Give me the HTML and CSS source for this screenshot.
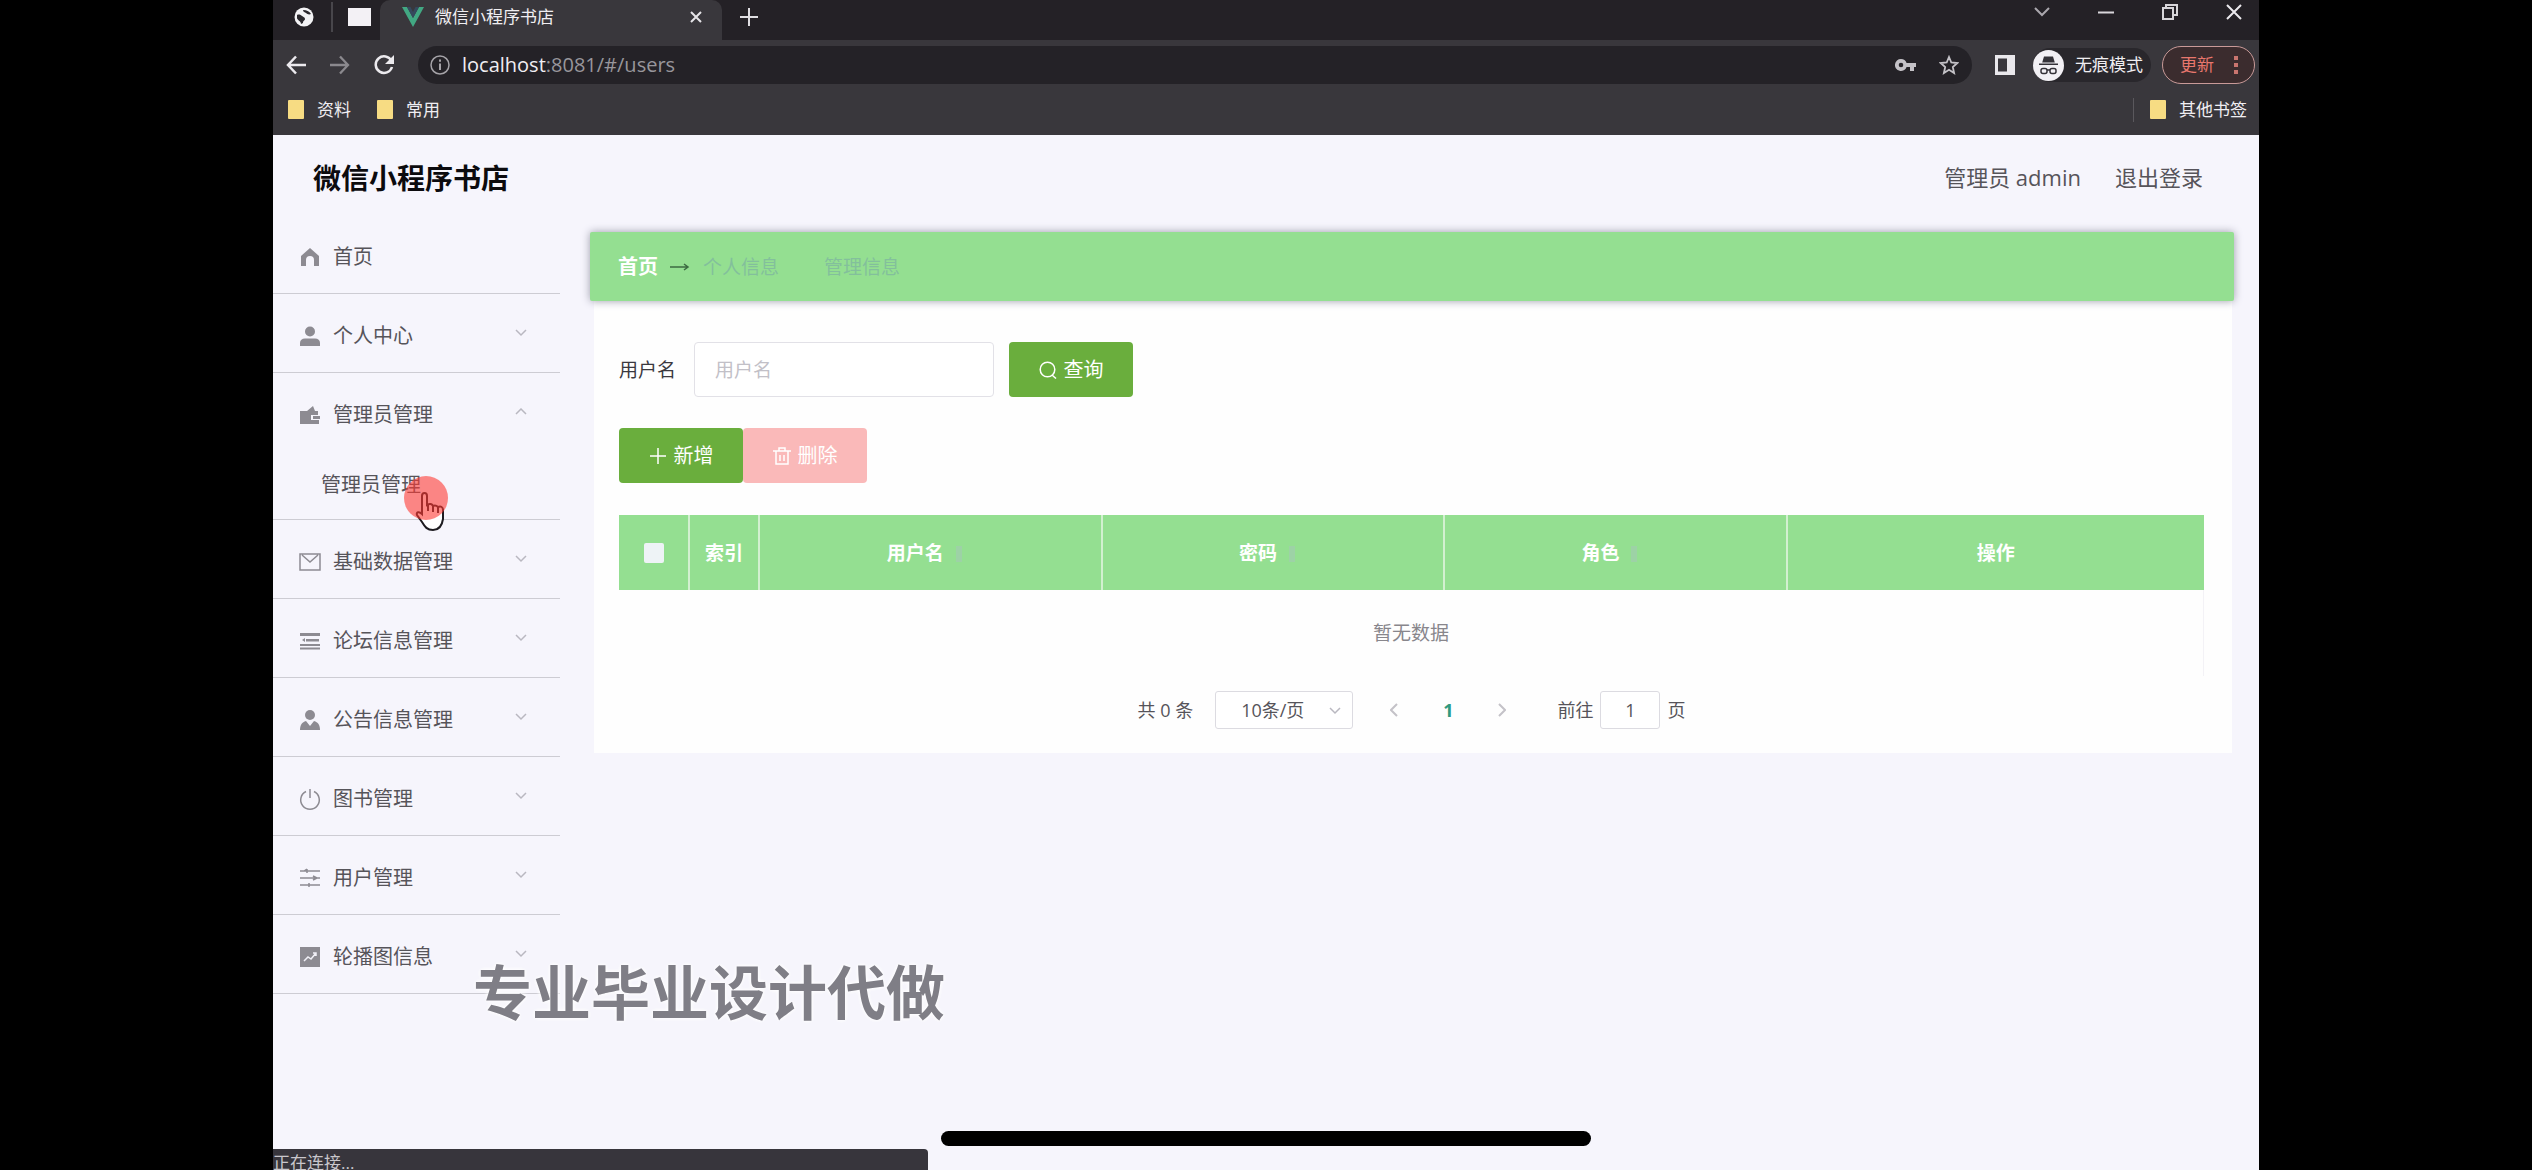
FILE: index.html
```html
<!DOCTYPE html>
<html lang="zh-CN">
<head>
<meta charset="utf-8">
<title>微信小程序书店</title>
<link rel="stylesheet" href="styles.css">
</head>
<body>
<div class="screen">
  <header class="browser">
    <div class="tabstrip">
      <div class="pinned">
        <svg width="20" height="20" viewBox="0 0 20 20"><circle cx="10" cy="10" r="9.5" fill="#f3f3f5"/><path d="M3 8c2-1 4 0 5 1s3 1 3 3-2 1-2 4l-2 1c0-3-4-4-4-6zM9 3c0 2 2 2 3 3s3 2 5 1c-1-2-4-4-8-4z" fill="#2a282d"/></svg>
        <span class="strip-rule"></span>
        <span class="blank-tab"></span>
      </div>
      <div class="tab">
        <svg width="22" height="20" viewBox="0 0 22 20"><path d="M0 0h5l6 11 6-11h5L11 20z" fill="#42a883"/><path d="M5 0h3.500l2.500 5 2.500-5H17l-6 11z" fill="#35495e"/></svg>
        <span class="tab-title">微信小程序书店</span>
        <button class="plain" aria-label="关闭标签页"><svg width="12" height="12" viewBox="0 0 12 12"><path d="M1 1l10 10M11 1L1 11" stroke="#e6e4e8" stroke-width="2"/></svg></button>
      </div>
      <button class="plain new-tab" aria-label="新标签页"><svg width="18" height="18" viewBox="0 0 18 18"><path d="M9 0v18M0 9h18" stroke="#e0dee2" stroke-width="2"/></svg></button>
      <div class="window-buttons">
        <button class="plain" aria-label="标签搜索"><svg width="16" height="10" viewBox="0 0 16 10"><path d="M1 1l7 7 7-7" fill="none" stroke="#aaa7ad" stroke-width="2"/></svg></button>
        <button class="plain" aria-label="最小化"><svg width="16" height="16" viewBox="0 0 16 16"><path d="M0 8.500h16" stroke="#d8d6da" stroke-width="2"/></svg></button>
        <button class="plain" aria-label="还原"><svg width="16" height="16" viewBox="0 0 16 16"><path d="M1 4h10v11H1zM4 4V1h11v10h-4" fill="none" stroke="#d8d6da" stroke-width="2"/></svg></button>
        <button class="plain" aria-label="关闭"><svg width="16" height="16" viewBox="0 0 16 16"><path d="M1 1l14 14M15 1L1 15" stroke="#ebe9ed" stroke-width="2"/></svg></button>
      </div>
    </div>
    <div class="toolbar">
      <button class="plain" aria-label="后退"><svg width="20" height="20" viewBox="0 0 20 20"><path d="M20 10H2M10 1.500L2 10l8 8.500" fill="none" stroke="#eceaee" stroke-width="2.500"/></svg></button>
      <button class="plain" aria-label="前进"><svg width="20" height="20" viewBox="0 0 20 20"><path d="M0 10h18M10 1.500l8 8.500-8 8.500" fill="none" stroke="#8b898e" stroke-width="2.300"/></svg></button>
      <button class="plain" aria-label="刷新"><svg width="20" height="20" viewBox="0 0 20 20"><path d="M17.500 6A8.300 8.300 0 1 0 18 12" fill="none" stroke="#eceaee" stroke-width="2.500"/><path d="M20 0v9h-9z" fill="#eceaee"/></svg></button>
      <div class="omnibox">
        <svg width="20" height="20" viewBox="0 0 20 20"><circle cx="10" cy="10" r="9" fill="none" stroke="#a5a3a8" stroke-width="1.500"/><path d="M10 8.500V15M10 4.500v2.300" stroke="#a5a3a8" stroke-width="2"/></svg>
        <p class="url"><b>localhost</b>:8081/#/users</p>
        <svg class="ico-key" width="22" height="14" viewBox="0 0 22 14"><path fill-rule="evenodd" d="M6 1a6 6 0 1 0 5.600 8H15v4h4V9h2V5h-9.400A6 6 0 0 0 6 1zm0 3.700a2.300 2.300 0 1 1 0 4.600 2.300 2.300 0 0 1 0-4.600z" fill="#c4c2c7"/></svg>
        <svg width="20" height="20" viewBox="0 0 20 20"><path d="M10 2l2.300 5.500 6 .500-4.500 4 1.300 6-5.100-3.200L4.900 18l1.300-6-4.500-4 6-.500z" fill="none" stroke="#c4c2c7" stroke-width="1.800"/></svg>
      </div>
      <svg class="ico-panel" width="20" height="20" viewBox="0 0 20 20"><path fill-rule="evenodd" d="M0 0h20v20H0zM3 3.500v13h9v-13z" fill="#eae8ec"/></svg>
      <div class="incognito">
        <svg width="31" height="31" viewBox="0 0 31 31"><circle cx="15.500" cy="15.500" r="15.500" fill="#f2f0f4"/><path d="M11 6.500h9l1.800 6H9.200zM6 13.500h19v1.500H6z" fill="#343238"/><g fill="none" stroke="#343238" stroke-width="1.500"><rect x="8" y="18.500" width="6" height="5" rx="2"/><rect x="17" y="18.500" width="6" height="5" rx="2"/><path d="M14 20h3"/></g></svg>
        <span>无痕模式</span>
      </div>
      <button class="update">更新<svg width="4" height="18" viewBox="0 0 4 18"><path d="M0 0h4v4H0zM0 7h4v4H0zM0 14h4v4H0z" fill="#c9756f"/></svg></button>
    </div>
    <nav class="bookmarks" aria-label="书签栏">
      <a href="#"><i class="folder"></i>资料</a>
      <a href="#"><i class="folder"></i>常用</a>
      <a href="#" class="others"><i class="folder"></i>其他书签</a>
    </nav>
  </header>

  <div class="page">
    <header class="topbar">
      <h1>微信小程序书店</h1>
      <span>管理员 admin</span>
      <a href="#">退出登录</a>
    </header>
    <div class="columns">
      <nav class="menu" aria-label="主菜单">
        <ul>
          <li><a href="#"><svg class="mi" viewBox="0 0 20 20"><path d="M10 1L1 9v10h5v-6a4 4 0 0 1 8 0v6h5V9z"/></svg>首页</a></li>
          <li><a href="#"><svg class="mi" viewBox="0 0 20 20"><circle cx="10" cy="5.500" r="5"/><path d="M0 20v-3c0-3 2-4.500 5-4.500h10c3 0 5 1.500 5 4.500v3z"/></svg>个人中心<svg class="arrow" viewBox="0 0 12 8"><path d="M1 1l5 5 5-5"/></svg></a></li>
          <li><a href="#"><svg class="mi" viewBox="0 0 20 20"><path d="M0 6h7l6-5 2 5h3v4h-7v5h8v4H0zM13 11h7v3h-7z"/></svg>管理员管理<svg class="arrow" viewBox="0 0 12 8"><path d="M1 6l5-5 5 5"/></svg></a>
            <a href="#" class="sub">管理员管理</a></li>
          <li><a href="#"><svg class="mi line" viewBox="0 0 20 20"><path d="M0 2h20v16H0zM2 3l8 7 8-7"/></svg>基础数据管理<svg class="arrow" viewBox="0 0 12 8"><path d="M1 1l5 5 5-5"/></svg></a></li>
          <li><a href="#"><svg class="mi" viewBox="0 0 20 20"><path d="M0 2h20v3H0zM2 9l3-2v4zM6 8h13v2.500H6zM0 13h20v2H0zM0 16.500h20v2H0z"/></svg>论坛信息管理<svg class="arrow" viewBox="0 0 12 8"><path d="M1 1l5 5 5-5"/></svg></a></li>
          <li><a href="#"><svg class="mi" viewBox="0 0 20 20"><circle cx="10" cy="5" r="5"/><path d="M0 20c0-5 2-8 6-9l4 5 4-5c4 1 6 4 6 9z"/></svg>公告信息管理<svg class="arrow" viewBox="0 0 12 8"><path d="M1 1l5 5 5-5"/></svg></a></li>
          <li><a href="#"><svg class="mi line" viewBox="0 0 20 20"><path d="M6 2.500a9.300 9.300 0 1 0 8 0M10 0v9"/></svg>图书管理<svg class="arrow" viewBox="0 0 12 8"><path d="M1 1l5 5 5-5"/></svg></a></li>
          <li><a href="#"><svg class="mi line" viewBox="0 0 20 20"><path d="M0 3h20M0 10h20M0 17h20M7 1v4M4 3l3-2M13 8l4 2-4 2M9 15v4"/></svg>用户管理<svg class="arrow" viewBox="0 0 12 8"><path d="M1 1l5 5 5-5"/></svg></a></li>
          <li><a href="#"><svg class="mi" viewBox="0 0 20 20"><path d="M0 0h20v20H0z"/><path d="M4 14l4-4 3 2 5-6M13 6h3v3" fill="none" stroke="#f1f0f7" stroke-width="1.500"/></svg>轮播图信息<svg class="arrow" viewBox="0 0 12 8"><path d="M1 1l5 5 5-5"/></svg></a></li>
        </ul>
      </nav>
      <main class="content">
        <nav class="crumbs" aria-label="面包屑">
          <a href="#" class="home">首页</a>
          <svg width="20" height="8" viewBox="0 0 20 8"><path d="M0 4h18M14 1l4 3-4 3" fill="none" stroke="#3d6b42" stroke-width="1.500"/></svg>
          <span>个人信息</span>
          <span class="last">管理信息</span>
        </nav>
        <section class="panel">
          <form class="search">
            <label for="uname">用户名</label>
            <input id="uname" class="field" type="text" placeholder="用户名">
            <button type="button" class="btn green"><svg width="18" height="18" viewBox="0 0 18 18"><circle cx="8.500" cy="8.500" r="7.300"/><path d="M13 14l4 3.500"/></svg>查询</button>
          </form>
          <div class="actions">
            <button type="button" class="btn green"><svg width="18" height="18" viewBox="0 0 18 18"><path d="M9 1v16M1 9h16"/></svg>新增</button>
            <button type="button" class="btn pink" disabled><svg width="18" height="18" viewBox="0 0 18 18"><path d="M0 4h18M6 4V1h6v3M3 4v13h12V4M7 8v6M11 8v6"/></svg>删除</button>
          </div>
          <table class="grid">
            <colgroup><col class="c-narrow"><col class="c-narrow"><col><col><col><col class="c-ops"></colgroup>
            <thead>
              <tr>
                <th><input type="checkbox" aria-label="全选"></th>
                <th>索引</th>
                <th>用户名<i class="sort"></i></th>
                <th>密码<i class="sort"></i></th>
                <th>角色<i class="sort"></i></th>
                <th>操作</th>
              </tr>
            </thead>
            <tbody><tr><td colspan="6">暂无数据</td></tr></tbody>
          </table>
          <div class="pager">
            <span>共 0 条</span>
            <div class="size">
              <select aria-label="每页条数"><option>10条/页</option></select>
              <svg class="arrow" viewBox="0 0 12 8"><path d="M1 1l5 5 5-5"/></svg>
            </div>
            <div class="steps">
              <button class="plain" aria-label="上一页"><svg width="8" height="14" viewBox="0 0 8 14"><path d="M7 1L1 7l6 6" fill="none" stroke="#c4c2c8" stroke-width="2"/></svg></button>
              <b>1</b>
              <button class="plain" aria-label="下一页"><svg width="8" height="14" viewBox="0 0 8 14"><path d="M1 1l6 6-6 6" fill="none" stroke="#c4c2c8" stroke-width="2"/></svg></button>
            </div>
            <label for="goto">前往</label>
            <input id="goto" type="text" value="1">
            <span>页</span>
          </div>
        </section>
      </main>
    </div>
    <svg class="pointer" width="46" height="58" viewBox="0 0 46 58"><path d="M18 20c0-4 5-4 5 0v9c3-2 5-1 6 1 2-1 4 0 5 1 3-1 5 0 5 3v9c-1 7-4 11-10 11s-8-3-11-8l-5-7c-1-3 2-4 5-1z" fill="#fff" stroke="#1d1b20" stroke-width="2"/><path d="M24 29v6M29 30v6M34 31v6" stroke="#1d1b20" stroke-width="2"/><circle cx="22" cy="22" r="22" fill="#ff3b34" fill-opacity=".6"/></svg>
    <p class="watermark">专业毕业设计代做</p>
  </div>
  <div class="status">正在连接...</div>
</div>
<div class="home-bar"></div>
</body>
</html>
```
FILE: styles.css
```css
* { box-sizing: border-box; }

body {
  margin: 0;
  background: #000;
  color: #56545a;
  font: 20px/30px "Open Sans", "Noto Sans CJK SC", sans-serif;
}

a { color: inherit; text-decoration: none; }
button, input, select { font: inherit; color: inherit; }
svg { flex: none; display: block; }
ul, p, h1 { margin: 0; padding: 0; list-style: none; }

.plain { padding: 0; border: 0; background: none; }

.screen {
  position: relative;
  display: flex;
  flex-direction: column;
  min-height: 100vh;
  margin: 0 273px;
  background: #f6f5fc;
  overflow: hidden;
}

/* Browser frame */
.browser { background: #39373c; color: #f0eef2; font-size: 17px; line-height: 24px; }

.tabstrip { display: flex; height: 40px; background: #242126; }
.pinned { display: flex; align-items: center; width: 107px; padding: 0 0 6px 21px; }
.strip-rule { width: 2px; height: 30px; margin: 0 15px 0 17px; background: #48464b; }
.blank-tab { width: 23px; height: 18px; background: #f3f1f5; }
.tab {
  display: flex;
  align-items: center;
  width: 342px;
  padding: 0 20px 6px 22px;
  border-radius: 10px 10px 0 0;
  background: #39373c;
}
.tab-title { flex: 1; margin-left: 11px; font-size: 17px; }
.new-tab { margin: 0 18px 6px; }
.window-buttons { display: flex; gap: 48px; margin-left: auto; padding: 0 17px 16px 0; align-items: center; }

.toolbar { display: flex; align-items: center; height: 50px; padding: 0 4px 0 13px; }
.toolbar > .plain { margin-right: 24px; }
.omnibox {
  display: flex;
  flex: 1;
  align-items: center;
  height: 38px;
  padding: 0 13px 0 12px;
  border-radius: 19px;
  background: #242227;
}
.url { flex: 1; margin-left: 12px; color: #98969b; font-size: 20px; }
.url b { color: #f0eef2; font-weight: 500; }
.ico-key { margin-right: 22px; }
.ico-panel { margin: 0 18px 0 23px; }
.incognito {
  display: flex;
  align-items: center;
  gap: 11px;
  height: 34px;
  padding-right: 8px;
  border-radius: 17px;
  background: #29272c;
}
.update {
  display: flex;
  align-items: center;
  justify-content: space-between;
  width: 93px;
  height: 38px;
  margin-left: 11px;
  padding: 0 16px 0 17px;
  border: 1px solid #c99a98;
  border-radius: 19px;
  background: #3b2c2e;
  color: #e8776d;
}

.bookmarks { display: flex; align-items: center; gap: 26px; height: 45px; padding: 0 12px 6px 15px; }
.bookmarks a { display: flex; align-items: center; gap: 13px; }
.bookmarks .others { margin-left: auto; padding-left: 16px; border-left: 1px solid #5a585d; }
.folder { width: 16px; height: 19px; border-radius: 1px; background: #f7dc83; }

/* Application */
.page { position: relative; flex: 1; }

.topbar { display: flex; align-items: center; height: 80px; padding: 5px 56px 0 40px; font-size: 22px; }
.topbar h1 { margin-right: auto; color: #0c0b0e; font-size: 28px; line-height: 40px; }
.topbar a { margin-left: 34px; }
.topbar span, .topbar a { padding-bottom: 2px; }

.columns { display: flex; }
.menu { flex: none; width: 287px; }
.menu li { border-bottom: 1px solid #cdccd3; }
.menu a { display: flex; align-items: center; height: 78px; padding: 6px 33px 0 27px; }
.menu .sub { height: 68px; padding: 0 0 0 48px; }
.mi { width: 20px; height: 20px; margin-right: 13px; fill: #8d8b92; }
.line { fill: none; stroke: #8d8b92; stroke-width: 1.500; overflow: visible; }
.arrow { width: 12px; height: 8px; fill: none; stroke: #b9b8c0; stroke-width: 1.500; }
.menu .arrow { margin: 0 0 6px auto; }

.content { flex: 1; padding: 17px 25px 0 30px; }
.crumbs {
  position: relative;
  display: flex;
  align-items: center;
  height: 69px;
  padding-left: 28px;
  background: #94df91;
  box-shadow: 0 0 8px #9d9dab;
  border-radius: 2px;
  color: #83bf9c;
  font-size: 19px;
}
.crumbs .home { color: #fff; font-size: 20px; font-weight: 700; }
.crumbs svg { margin: 0 13px 0 12px; }
.crumbs .last { margin-left: 45px; }

.panel { margin: 0 2px 0 4px; padding: 41px 28px 24px 25px; background: #fefefe; }
.search { display: flex; align-items: center; height: 55px; color: #3b393f; font-size: 19px; }
.search label { width: 75px; }
.field {
  width: 300px;
  height: 55px;
  margin-right: 15px;
  padding: 0 20px;
  border: 1px solid #e2e1e7;
  border-radius: 4px;
  background: #fff;
}
.field::placeholder { color: #c2c0c7; opacity: 1; }

.btn {
  display: flex;
  align-items: center;
  justify-content: center;
  gap: 7px;
  width: 124px;
  height: 55px;
  padding: 0;
  border: 0;
  border-radius: 4px;
  color: #fff;
  font-size: 20px;
}
.btn svg { fill: none; stroke: #fff; stroke-width: 1.500; }
.green { background: #6aae3d; }
.pink { background: #fab9b9; }
.actions { display: flex; margin: 31px 0 32px; }

.grid { width: 100%; border-collapse: collapse; table-layout: fixed; }
.c-narrow { width: 70px; }
.c-ops { width: 26.3%; }
.grid th { height: 75px; padding: 0; background: #94df91; color: #fff; font-size: 19px; }
.grid th + th { border-left: 2px solid #d2f0d0; }
.grid th input {
  display: block;
  width: 20px;
  height: 20px;
  margin: 0 auto;
  appearance: none;
  background: #eef3f6;
  border-radius: 2px;
}
.sort { display: inline-block; width: 6px; height: 16px; margin: 0 12px; background: #9dd2a6; vertical-align: middle; }
.grid td { height: 86px; padding: 0; border-right: 1px solid #f3f2f6; color: #88868c; text-align: center; font-size: 19px; }

.pager { display: flex; align-items: center; justify-content: center; height: 38px; margin-top: 15px; font-size: 18px; }
.size { position: relative; margin-left: 22px; }
.size select {
  width: 138px;
  height: 38px;
  padding: 0 25px;
  appearance: none;
  border: 1px solid #dcdbe1;
  border-radius: 3px;
  background: #fff;
}
.size .arrow { position: absolute; right: 12px; top: 16px; }
.steps { display: flex; align-items: center; gap: 45px; margin: 0 51px 0 37px; }
.steps b { color: #2f9a80; }
#goto {
  width: 60px;
  height: 38px;
  margin: 0 7px;
  padding: 0;
  border: 1px solid #dcdbe1;
  border-radius: 3px;
  background: #fff;
  text-align: center;
}

/* Layers over the page */
.pointer { position: absolute; left: 131px; top: 341px; }
.watermark {
  position: absolute;
  left: 200px;
  top: 815px;
  color: #7f7e86;
  font-size: 59px;
  font-weight: 700;
  line-height: 84px;
  white-space: nowrap;
  text-shadow: 0 0 4px #fff, 0 0 4px #fff;
}
.status {
  position: absolute;
  left: 0;
  bottom: 0;
  width: 33%;
  height: 21px;
  border-radius: 0 4px 0 0;
  background: #37353c;
  color: #c9c7cc;
  font-size: 17px;
  line-height: 28px;
  overflow: hidden;
}
.home-bar {
  position: fixed;
  left: 50%;
  bottom: 24px;
  width: 650px;
  height: 15px;
  margin-left: -325px;
  border-radius: 8px;
  background: #000;
}
```
